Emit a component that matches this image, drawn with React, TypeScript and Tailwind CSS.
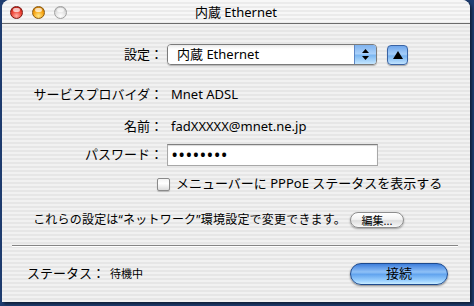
const stripes =
  "bg-[repeating-linear-gradient(to_bottom,#f1f1f1_0px,#f1f1f1_2px,#e6e6e6_2px,#e6e6e6_4px)]";

function Light({ tone }: { tone: "red" | "yellow" | "gray" }) {
  const fill =
    tone === "red"
      ? "bg-[radial-gradient(circle_at_50%_80%,#ffb3a8_0%,#f04a3c_45%,#b3100a_100%)] border-[#7a1a14]"
      : tone === "yellow"
      ? "bg-[radial-gradient(circle_at_50%_80%,#ffe88a_0%,#f7a514_50%,#b86a00_100%)] border-[#8a5a10]"
      : "bg-[radial-gradient(circle_at_50%_80%,#ffffff_0%,#e2e2e2_50%,#b8b8b8_100%)] border-[#a0a0a0]";
  return (
    <span className={`relative block w-[13px] h-[13px] rounded-full border ${fill}`}>
      <span className="absolute left-[2px] top-[1px] w-[7px] h-[4px] rounded-full bg-white/70" />
    </span>
  );
}

function Label({ children }: { children: React.ReactNode }) {
  return <div className="w-[161px] shrink-0 text-right">{children}</div>;
}

export default function App() {
  return (
    <div className="w-[474px] h-[306px] bg-[#1f3d70] pl-[2px] overflow-hidden font-[family-name:'Noto_Sans','Noto_Sans_CJK_JP',sans-serif] text-[13px] text-black">
      <div className={`w-[468px] h-[302px] rounded-t-[8px] overflow-hidden flex flex-col ${stripes} shadow-[2px_2px_3px_rgba(0,0,0,0.5)]`}>
        {/* title bar */}
        <div className="h-[24px] shrink-0 grid grid-cols-[1fr_auto_1fr] items-center border-b border-[#6c6c6c] bg-[repeating-linear-gradient(to_bottom,#f7f7f7_0px,#f7f7f7_2px,#ebebeb_2px,#ebebeb_4px)]">
          <div className="flex items-center gap-[9px] pl-[8px] pt-[1px]">
            <Light tone="red" />
            <Light tone="yellow" />
            <Light tone="gray" />
          </div>
          <div className="leading-none pt-[1px]">内蔵 Ethernet</div>
          <div />
        </div>

        {/* body */}
        <div className="flex-1 flex flex-col">
          <div className="mt-[20px] h-[21px] flex items-center">
            <Label>設定：</Label>
            <div className="ml-[4px] w-[210px] h-[21px] flex rounded-[4px] border border-[#7b7b7b] shadow-[0_1px_1px_rgba(0,0,0,0.25)] overflow-hidden">
              <div className="flex-1 bg-[linear-gradient(to_bottom,#e9e9e9_0px,#ffffff_4px,#ffffff_100%)] pl-[9px] flex items-center">
                内蔵 Ethernet
              </div>
              <div className="w-[22px] border-l border-[#5c86c4] bg-[linear-gradient(to_bottom,#7fb2ee_0%,#a9d0fa_45%,#7db8f2_55%,#c4e6ff_100%)] flex items-center justify-center">
                <svg width="7" height="11" viewBox="0 0 7 11">
                  <path d="M3.5 0 L7 4 L0 4 Z M3.5 11 L7 7 L0 7 Z" fill="#000" />
                </svg>
              </div>
            </div>
            <div className="ml-[10px] w-[21px] h-[20px] rounded-[4px] border border-[#3a63a3] bg-[linear-gradient(to_bottom,#6fa6ec_0%,#a5cdf8_45%,#78b3f0_55%,#c0e3ff_100%)] shadow-[0_1px_1px_rgba(0,0,0,0.3)] flex items-center justify-center">
              <svg width="10" height="8" viewBox="0 0 10 8">
                <path d="M5 0 L10 8 L0 8 Z" fill="#000" />
              </svg>
            </div>
          </div>

          <div className="mt-[20px] h-[20px] flex items-center">
            <Label>サービスプロバイダ：</Label>
            <div className="pl-[8px]">Mnet ADSL</div>
          </div>

          <div className="mt-[12px] h-[20px] flex items-center">
            <Label>名前：</Label>
            <div className="pl-[8px]">fadXXXXX@mnet.ne.jp</div>
          </div>

          <div className="mt-[7px] h-[22px] flex items-center">
            <Label>パスワード：</Label>
            <div className="ml-[4px] w-[211px] h-[22px] bg-white border border-[#a8a8a8] border-t-[#7f7f7f] shadow-[inset_0_1px_1px_rgba(0,0,0,0.15)] pl-[4px] flex items-center">
              <span className="text-[14px] font-bold tracking-[1.8px] leading-none">••••••••</span>
            </div>
          </div>

          <div className="mt-[11px] h-[14px] pl-[155px] flex items-center gap-[6px]">
            <span className="w-[13px] h-[13px] rounded-[2px] border border-[#8a8a8a] bg-[linear-gradient(to_bottom,#f4f4f4_0%,#ffffff_40%,#dcdcdc_100%)] shadow-[0_1px_1px_rgba(0,0,0,0.2)]" />
            <span>メニューバーに PPPoE ステータスを表示する</span>
          </div>

          <div className="mt-[21px] h-[16px] pr-[66px] flex items-center justify-end gap-[4px]">
            <span className="text-[12px] tracking-[0.2px]">これらの設定は“ネットワーク”環境設定で変更できます。</span>
            <div className="w-[54px] h-[16px] rounded-full border border-[#8d8d8d] bg-[linear-gradient(to_bottom,#ffffff_0%,#f2f2f2_45%,#dedede_55%,#f8f8f8_100%)] shadow-[0_1px_2px_rgba(0,0,0,0.35)] flex items-center justify-center text-[11px] leading-none">
              編集...
            </div>
          </div>

          <div className="mt-[17px] ml-[10px] mr-[12px] h-px bg-[#858585] shadow-[0_1px_0_#ffffff]" />

          <div className="mt-[17px] h-[22px] pl-[25px] pr-[22px] flex items-center">
            <span>ステータス：</span>
            <span className="ml-[5px] text-[11px]">待機中</span>
            <div className="ml-auto w-[98px] h-[22px] rounded-full border border-[#1d4a8e] bg-[linear-gradient(to_bottom,#3f7fdc_0%,#8fc1f7_40%,#62a4ee_52%,#9fd3ff_85%,#c8ecff_100%)] shadow-[0_1px_2px_rgba(0,0,0,0.45)] flex items-center justify-center">
              接続
            </div>
          </div>
        </div>
      </div>
    </div>
  );
}
